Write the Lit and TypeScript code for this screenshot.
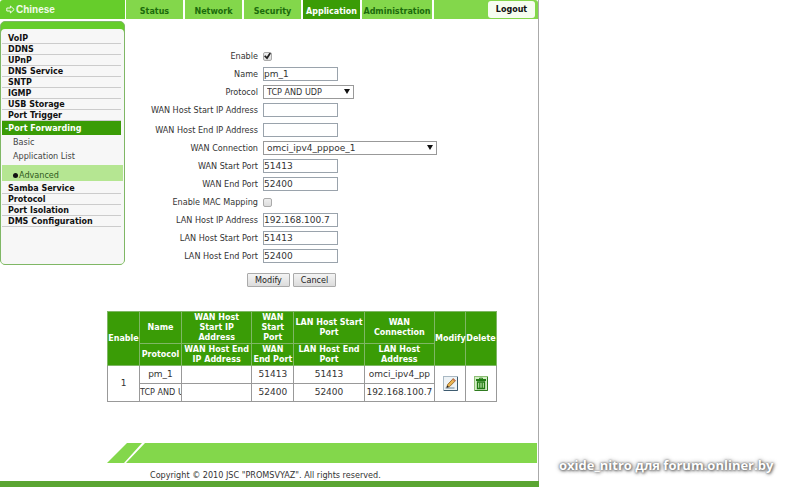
import { LitElement, html, css, svg } from "lit";
import { customElement, state } from "lit/decorators.js";
import { classMap } from "lit/directives/class-map.js";

const TABS = ["Status", "Network", "Security", "Application", "Administration"];

type MenuItem = { label: string; kind?: "active" | "sub" | "current" };

const MENU: MenuItem[] = [
  { label: "VoIP" },
  { label: "DDNS" },
  { label: "UPnP" },
  { label: "DNS Service" },
  { label: "SNTP" },
  { label: "IGMP" },
  { label: "USB Storage" },
  { label: "Port Trigger" },
  { label: "Port Forwarding", kind: "active" },
  { label: "Basic", kind: "sub" },
  { label: "Application List", kind: "sub" },
  { label: "Advanced", kind: "current" },
  { label: "Samba Service" },
  { label: "Protocol" },
  { label: "Port Isolation" },
  { label: "DMS Configuration" },
];

type Field = {
  id: string;
  label: string;
  type: "text" | "check" | "select";
  value?: string;
  on?: boolean;
  wide?: boolean;
};

const FIELDS: Field[] = [
  { id: "enable", label: "Enable", type: "check", on: true },
  { id: "name", label: "Name", type: "text", value: "pm_1" },
  { id: "protocol", label: "Protocol", type: "select", value: "TCP AND UDP" },
  { id: "wan-start-ip", label: "WAN Host Start IP Address", type: "text", value: "" },
  { id: "wan-end-ip", label: "WAN Host End IP Address", type: "text", value: "" },
  { id: "wan-conn", label: "WAN Connection", type: "select", value: "omci_ipv4_pppoe_1", wide: true },
  { id: "wan-start", label: "WAN Start Port", type: "text", value: "51413" },
  { id: "wan-end", label: "WAN End Port", type: "text", value: "52400" },
  { id: "mac", label: "Enable MAC Mapping", type: "check", on: false },
  { id: "lan-ip", label: "LAN Host IP Address", type: "text", value: "192.168.100.7" },
  { id: "lan-start", label: "LAN Host Start Port", type: "text", value: "51413" },
  { id: "lan-end", label: "LAN Host End Port", type: "text", value: "52400" },
];

const iconFrame = svg`
  <rect x="0.5" y="0.5" width="14" height="14" fill="#eef3f6" stroke="#a9b8c3"/>
  <path d="M14.5 1V14.5H1" fill="none" stroke="#3d5b70"/>`;

const pencilIcon = html`<svg width="15" height="15" viewBox="0 0 15 15" aria-hidden="true">
  ${iconFrame}
  <path d="M2.5 12H11.5" stroke="#8fa3b3" stroke-width="1.4"/>
  <path d="M4 11.2L4.6 8.6L10.2 2.6L12.4 4.8L6.6 10.6Z" fill="#eab552" stroke="#8a5a1c" stroke-width="0.8"/>
  <path d="M9.4 3.4L10.4 2.4L12.6 4.6L11.6 5.6Z" fill="#c9745a"/>
  <path d="M3.4 11.8L4.2 9.4L5.9 11.1Z" fill="#222"/>
</svg>`;

const trashIcon = html`<svg width="14" height="15" viewBox="0 0 14 15" aria-hidden="true">
  <rect x="0.5" y="0.5" width="13" height="14" fill="#d3edc4" stroke="#8cbf74"/>
  <path d="M13.5 1V14.5H1" fill="none" stroke="#2f7a20"/>
  <path d="M5.5 3.2V2.2H8.5V3.2" fill="none" stroke="#1f7a12"/>
  <rect x="2" y="3" width="10" height="2" fill="#1f7a12"/>
  <path d="M3.5 6H10.5V12.5H3.5Z" fill="#bfe5ac" stroke="#1f7a12" stroke-width="1.3"/>
  <path d="M5.5 6.5V12M7 6.5V12M8.5 6.5V12" stroke="#1f7a12" stroke-width="0.8"/>
</svg>`;

@customElement("app-root")
export class AppRoot extends LitElement {
  @state() private tab = "Application";

  static styles = css`
    :host {
      display: grid;
      grid-template-columns: minmax(0, 539fr) minmax(0, 261fr);
      min-height: 100vh;
      box-sizing: border-box;
      background: #fff;
      color: #333;
      font-family: "DejaVu Sans Condensed", "DejaVu Sans", sans-serif;
      font-size: 9px;
      line-height: 11px;
    }
    * { box-sizing: border-box; }
    a { color: inherit; text-decoration: none; }

    .page {
      display: flex;
      flex-direction: column;
      border-right: 1px solid #aaa;
      margin-bottom: 1px;
    }
    .bold {
      font-family: "DejaVu Sans", sans-serif;
      font-weight: bold;
      font-size: 8px;
    }

    .top { display: flex; height: 19px; gap: 2px; }
    .lang {
      width: 125px;
      flex: none;
      display: flex;
      align-items: center;
      gap: 1px;
      padding-left: 6px;
      background: #66cd2b;
      color: #f2fbea;
      font-family: "Liberation Sans", sans-serif;
      font-weight: bold;
      font-size: 10px;
      border-radius: 3px 0 0 0;
    }
    .tabs { display: flex; gap: 2px; flex: 1; margin-left: -1px; }
    .tab {
      background: #83d74b;
      color: #1b6b0b;
      width: 57px;
      display: flex;
      align-items: center;
      justify-content: center;
      padding-top: 3px;
    }
    .tab.long { width: 70px; }
    .tab.on { background: #3a9c06; color: #fff; }
    .end {
      flex: 1;
      background: #83d74b;
      display: flex;
      justify-content: flex-end;
      padding: 1px 3px 1px 0;
      border-radius: 0 3px 0 0;
    }
    .logout {
      width: 47px;
      border: 0;
      border-radius: 3px;
      background: #f6fdf0;
      color: #111;
      padding: 0;
    }

    .body { display: flex; padding-top: 2px; }
    .side {
      width: 125px;
      flex: none;
      height: 244px;
      border: 1px solid #7fb765;
      border-radius: 5px;
      background: #66cd2b;
      padding-top: 7px;
      align-self: flex-start;
      overflow: hidden;
    }
    .menu {
      height: 100%;
      background: #f7f7f7;
      border-radius: 4px 4px 0 0;
      padding: 4px 3px 0 1px;
      display: flex;
      flex-direction: column;
    }
    .item {
      height: 11px;
      line-height: 12px;
      border-bottom: 1px solid #ccc;
      padding-left: 6px;
      color: #111;
      white-space: nowrap;
    }
    .item.active {
      height: 14px;
      line-height: 16px;
      border: 0;
      background: #3a9c06;
      color: #fff;
      padding-left: 3px;
    }
    .item.sub {
      font-family: "DejaVu Sans Condensed", sans-serif;
      font-size: 9px;
      font-weight: normal;
      height: 14px;
      line-height: 14px;
      border: 0;
      padding-left: 11px;
      color: #444;
    }
    .item.current {
      height: 16px;
      margin: 2px -2px 2px 0;
      padding-top: 4px;
      background: #b5e692;
      color: #2f5a1c;
      display: flex;
      align-items: center;
    }
    .dot { width: 5px; height: 5px; border-radius: 50%; background: #111; margin-right: 1px; }

    .form { flex: 1; padding-top: 26px; }
    .row { display: flex; align-items: center; height: 18px; gap: 5px; }
    .row.gap { margin-bottom: 2px; }
    .label { width: 133px; text-align: right; white-space: nowrap; }
    .text, .select {
      height: 14px;
      border: 1px solid #999;
      border-radius: 0;
      background: #fff;
      color: #333;
      margin: 0;
      font-size: 9px;
      line-height: 11px;
    }
    .text {
      width: 75px;
      padding: 0;
      border-color: #9aa3ac;
      font-family: "DejaVu Sans", sans-serif;
    }
    .pick { position: relative; display: flex; width: 91px; }
    .pick.wide { width: 174px; }
    .select {
      appearance: none;
      width: 100%;
      padding: 0 0 0 3px;
      font-family: "DejaVu Sans Condensed", sans-serif;
    }
    .wide .select { font-family: "DejaVu Sans", sans-serif; }
    .arrow { position: absolute; right: 4px; top: 4px; pointer-events: none; }
    .check {
      appearance: none;
      width: 9px;
      height: 9px;
      margin: 0;
      border: 1px solid #aaa;
      border-radius: 2px;
      background: linear-gradient(#eee, #ddd);
      display: grid;
    }
    .check:checked::before {
      content: "";
      background: #222;
      clip-path: polygon(0 55%, 20% 40%, 40% 62%, 80% 0, 100% 14%, 45% 100%);
    }
    .actions { display: flex; gap: 3px; padding: 8px 0 0 122px; }
    .btn {
      height: 14px;
      width: 43px;
      padding: 0;
      border: 1px solid #aaa;
      border-radius: 1px;
      background: linear-gradient(#f4f4f4, #dcdcdc);
      font-family: "DejaVu Sans Condensed", sans-serif;
      font-size: 9px;
      line-height: 11px;
      color: #222;
    }

    .list { padding: 24px 41px 0 107px; }
    .table { width: 100%; table-layout: fixed; border-collapse: collapse; }
    .table th, .table td {
      border: 1px solid #999;
      padding: 0;
      text-align: center;
      vertical-align: middle;
    }
    .table th {
      background: #3a9c06;
      border-color: #7fb765;
      color: #fff;
      line-height: 10px;
      white-space: nowrap;
    }
    .table td { height: 18px; font-family: "DejaVu Sans", sans-serif; }
    .h1 th { height: 32px; }
    .h2 th { height: 22px; }
    .c-s { width: 32px; }
    .c-n { width: 42px; }
    .c-i { width: 31px; }
    .clip { overflow: hidden; white-space: nowrap; text-align: left; }
    .clip.narrow { font-family: "DejaVu Sans Condensed", sans-serif; }
    .clip.inset { margin: 0 4px; }
    .icon { border: 0; padding: 0; background: none; display: block; margin: 0 auto; height: 15px; }
    .icon svg { display: block; }

    .foot { margin-top: auto; padding-top: 24px; }
    .band { display: flex; height: 20px; padding: 0 1px 0 107px; }
    .band svg { flex: none; display: block; }
    .fill { flex: 1; background: #83d74b; }
    .copy { margin: 0; padding: 7px 0 0 150px; height: 18px; white-space: nowrap; }
    .bar { height: 6px; background: #5aa532; margin-right: -1px; }

    .mark {
      align-self: end;
      justify-self: start;
      margin: 0 0 14px 20px;
      white-space: nowrap;
      font-family: "Open Sans", sans-serif;
      font-weight: bold;
      font-size: 13px;
      line-height: 18px;
      color: #fff;
      text-shadow: 0 0 2px #666, 1px 1px 3px #666, 0 0 5px #888;
    }
  `;

  private renderControl(f: Field) {
    if (f.type === "check") {
      return html`<input class="check" type="checkbox" id=${f.id} ?checked=${f.on} />`;
    }
    if (f.type === "select") {
      return html`<span class=${classMap({ pick: true, wide: !!f.wide })}>
        <select class="select" id=${f.id}><option>${f.value}</option></select>
        <svg class="arrow" width="6" height="5" viewBox="0 0 6 5" aria-hidden="true"><path d="M0 0H6L3 5Z" fill="#111"/></svg>
      </span>`;
    }
    return html`<input class="text" type="text" id=${f.id} .value=${f.value ?? ""} />`;
  }

  private renderItem(m: MenuItem) {
    const cls = {
      item: true,
      bold: true,
      active: m.kind === "active",
      sub: m.kind === "sub" || m.kind === "current",
      current: m.kind === "current",
    };
    return html`<a href="#" class=${classMap(cls)}>${m.kind === "current"
      ? html`<span class="dot"></span>`
      : ""}${m.kind === "active" ? "-" : ""}${m.label}</a>`;
  }

  render() {
    return html`
      <div class="page">
        <header class="top">
          <a class="lang" href="#">
            <svg width="9" height="9" viewBox="0 0 9 9" aria-hidden="true">
              <path d="M0.8 3H4.4V1L8.2 4.5L4.4 8V6H0.8Z" fill="none" stroke="#f2fbea" stroke-width="1"/>
            </svg>Chinese</a>
          <nav class="tabs">
            ${TABS.map(
              (t) => html`<a href="#" class=${classMap({ tab: true, bold: true, on: t === this.tab, long: t.length > 12 })}
                @click=${() => (this.tab = t)}>${t}</a>`
            )}
            <div class="end"><button class="logout bold">Logout</button></div>
          </nav>
        </header>
        <div class="body">
          <aside class="side"><nav class="menu">${MENU.map((m) => this.renderItem(m))}</nav></aside>
          <form class="form" @submit=${(e: Event) => e.preventDefault()}>
            ${FIELDS.map(
              (f) => html`<div class=${classMap({ row: true, gap: f.id === "wan-start-ip" })}>
                <label class="label" for=${f.id}>${f.label}</label>${this.renderControl(f)}
              </div>`
            )}
            <div class="actions">
              <button class="btn">Modify</button><button class="btn" type="button">Cancel</button>
            </div>
          </form>
        </div>
        <section class="list">
          <table class="table">
            <colgroup>
              <col class="c-s" /><col class="c-n" /><col /><col class="c-n" /><col /><col /><col class="c-i" /><col class="c-i" />
            </colgroup>
            <thead>
              <tr class="h1">
                <th class="bold" rowspan="2">Enable</th>
                <th class="bold">Name</th>
                <th class="bold">WAN Host<br />Start IP<br />Address</th>
                <th class="bold">WAN<br />Start<br />Port</th>
                <th class="bold">LAN Host Start<br />Port</th>
                <th class="bold">WAN<br />Connection</th>
                <th class="bold" rowspan="2">Modify</th>
                <th class="bold" rowspan="2">Delete</th>
              </tr>
              <tr class="h2">
                <th class="bold">Protocol</th>
                <th class="bold">WAN Host End<br />IP Address</th>
                <th class="bold">WAN<br />End Port</th>
                <th class="bold">LAN Host End<br />Port</th>
                <th class="bold">LAN Host<br />Address</th>
              </tr>
            </thead>
            <tbody>
              <tr>
                <td rowspan="2">1</td>
                <td>pm_1</td>
                <td></td>
                <td>51413</td>
                <td>51413</td>
                <td><div class="clip inset">omci_ipv4_pppoe_1</div></td>
                <td rowspan="2"><button class="icon" aria-label="Modify">${pencilIcon}</button></td>
                <td rowspan="2"><button class="icon" aria-label="Delete">${trashIcon}</button></td>
              </tr>
              <tr>
                <td><div class="clip narrow">TCP AND UDP</div></td>
                <td></td>
                <td>52400</td>
                <td>52400</td>
                <td>192.168.100.7</td>
              </tr>
            </tbody>
          </table>
        </section>
        <footer class="foot">
          <div class="band">
            <svg width="39" height="20" viewBox="0 0 39 20" aria-hidden="true">
              <path d="M20 0H35L17 20H0Z M38 0H39V20H19Z" fill="#83d74b"/>
            </svg>
            <div class="fill"></div>
          </div>
          <p class="copy">Copyright © 2010 JSC "PROMSVYAZ". All rights reserved.</p>
          <div class="bar"></div>
        </footer>
      </div>
      <div class="mark">oxide_nitro для forum.onliner.by</div>
    `;
  }
}
